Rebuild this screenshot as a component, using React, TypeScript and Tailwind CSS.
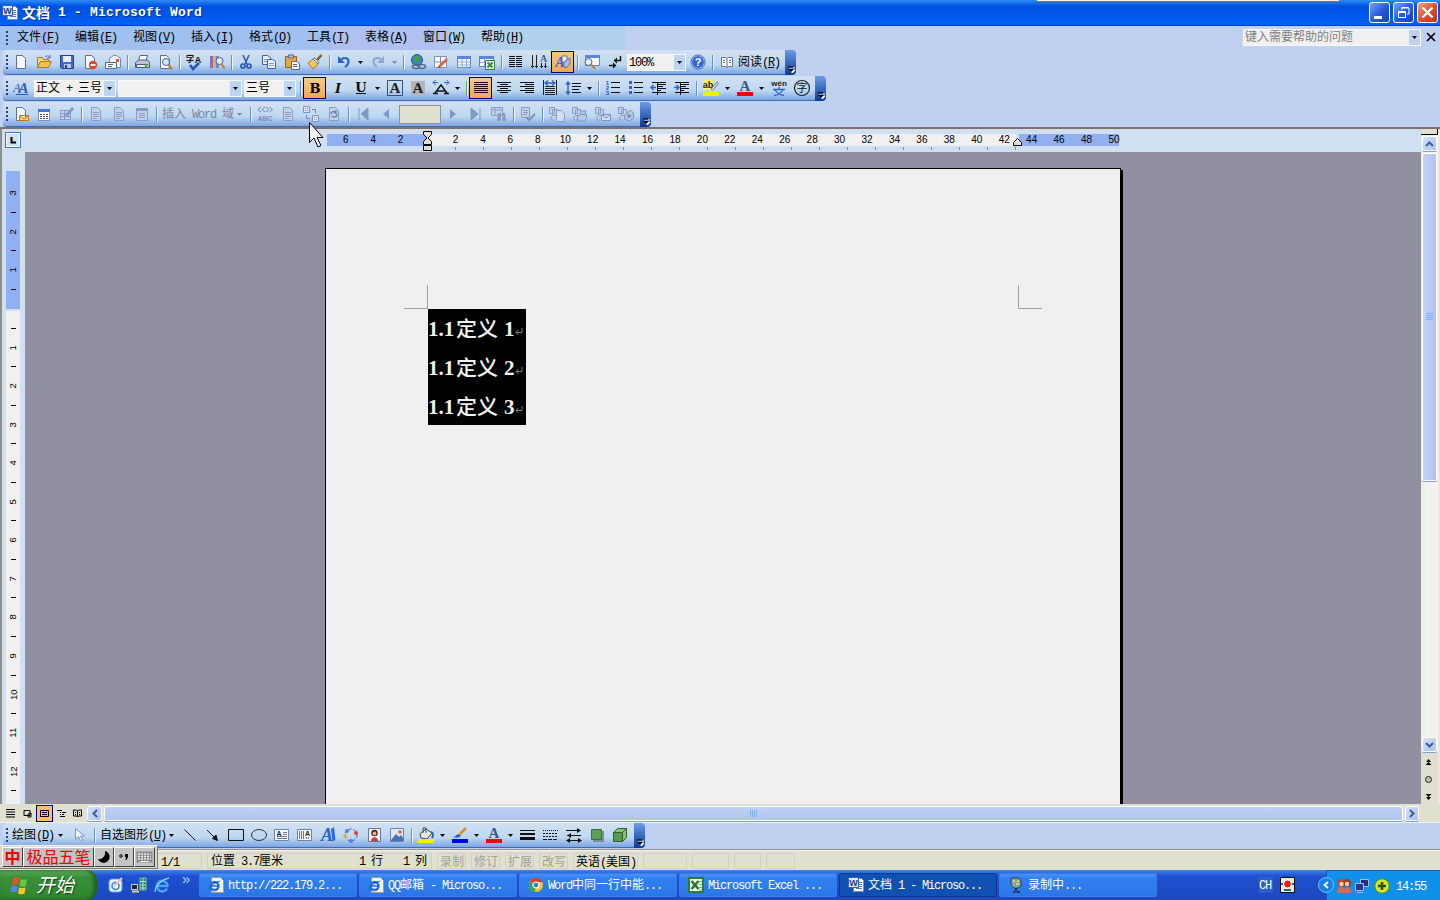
import React from "react";
import clsx from "clsx";

const latin = "font-['Liberation_Mono',monospace] text-[12px] tracking-[-1.2px]";

// Splits a label in CJK and half-width runs. "&X" marks an accelerator key.
const Label = ({ text, className }: { text: string; className?: string }) => {
  const runs = text.match(/&.|[\x20-\x25\x27-\x7e]+|[^\x20-\x7e]+/g) || [];
  return (
    <span className={clsx("whitespace-pre leading-[14px] text-[12px] font-['Noto_Sans_CJK_SC',sans-serif]", className)}>
      {runs.map((run, i) => {
        if (run[0] === "&") {
          return (
            <span key={i} className={clsx(latin, "underline underline-offset-1")}>
              {run[1]}
            </span>
          );
        }
        return run.charCodeAt(0) < 127 ? (
          <span key={i} className={latin}>
            {run}
          </span>
        ) : (
          <span key={i}>{run}</span>
        );
      })}
    </span>
  );
};

const Svg = ({ children, w = 16, h = 16 }: { children: React.ReactNode; w?: number; h?: number }) => (
  <svg width={w} height={h} viewBox={`0 0 ${w} ${h}`} fill="none" className="block shrink-0 overflow-visible">
    {children}
  </svg>
);

const doc = <path d="M3.5 1.5h6l3 3v10h-9z" fill="#f4f7ff" stroke="#5b6f9c" />;
const grayDoc = <path d="M3.5 1.5h6l3 3v10h-9z" fill="#c3d2ec" stroke="#8a9cc4" />;
const grayLines = <path d="M5 6.5h6M5 8.5h6M5 10.5h6M5 12.5h4" stroke="#8a9cc4" />;
const sheets = (
  <path d="M.5 1.5h5v6h-5zM3.5 3.5h5v6h-5zM2 10v4h3" fill="#c3d2ec" stroke="#8a9cc4" />
);
const serifText = (x: number, y: number, size: number, letter: string, fill = "#111") => (
  <text x={x} y={y} fontSize={size} fontWeight="bold" fontFamily="Liberation Serif, serif" fill={fill} textAnchor="middle">
    {letter}
  </text>
);
const slabText = (y: number, letter: string) => (
  <text x={8} y={y} fontSize={13} fontWeight="bold" fontFamily="DejaVu Serif, serif" fill="#000" textAnchor="middle">
    {letter}
  </text>
);
const sansText = (x: number, y: number, size: number, text: string, fill = "#111") => (
  <text x={x} y={y} fontSize={size} fontWeight="bold" fontFamily="Liberation Sans, sans-serif" fill={fill} textAnchor="middle">
    {text}
  </text>
);

const icons: Record<string, React.ReactNode> = {
  new: doc,
  open: (
    <>
      <path d="M1.5 13.5v-10h5l1 2h5v3" fill="#f5d77a" stroke="#a8792a" />
      <path d="M1.5 13.5l3-6h11l-3 6z" fill="#f6c24a" stroke="#a8792a" />
      <path d="M9 3c2-2 4-1 5 1m0-3v3h-3" stroke="#4a6fb5" />
    </>
  ),
  save: (
    <>
      <path d="M1.5 1.5h13v13h-12l-1-1z" fill="#4769cf" stroke="#27408f" />
      <path d="M4 2h8v6H4z" fill="#e8effc" />
      <path d="M5 10h7v4H5z" fill="#b8c6ea" />
      <path d="M6 11h2v3H6z" fill="#27408f" />
    </>
  ),
  permission: (
    <>
      {doc}
      <circle cx="11" cy="11" r="4.2" fill="#e0442a" />
      <path d="M8.5 11h5" stroke="#fff" strokeWidth="1.8" />
    </>
  ),
  mail: (
    <>
      <path d="M4.500 7.500v-3l4-3h3l4 3v9h-11z" fill="#f1f4fb" stroke="#7384a8" />
      <path d="M.5 8.500h11v6H.5zM3 10.500h5M3 12.500h4" fill="#fff" stroke="#56688f" />
      <path d="M11 5h3v3h-3z" fill="#d8602f" />
    </>
  ),
  print: (
    <>
      <path d="M4.500 6.500l1.500-5h7.500l-1.500 5" fill="#fff" stroke="#55628a" />
      <path d="M1.500 8.500l3-2.500h9l2 2.500v5h-14z" fill="#b9c2d6" stroke="#4c587c" />
      <path d="M2.500 10.500h9v3h-9z" fill="#e8ecf5" stroke="#4c587c" />
      <path d="M11 10h3v2h-3z" fill="#2db92d" />
    </>
  ),
  preview: (
    <>
      {doc}
      <circle cx="9" cy="8" r="3.5" fill="#cfe3f6" stroke="#53658d" />
      <path d="M11.5 11l3.5 4" stroke="#c97a2b" strokeWidth="2" />
    </>
  ),
  spell: (
    <>
      <text x="0" y="8" fontSize="8" fontWeight="bold" fontFamily="Noto Sans CJK SC, sans-serif" fill="#111">字</text>
      {sansText(12, 9, 9, "A")}
      <path d="M4 11l3 4 6-6" stroke="#2855b5" strokeWidth="2.6" />
    </>
  ),
  research: (
    <>
      <path d="M1 2h3v12H1z" fill="#8e6fb5" />
      <path d="M4 2h3v12H4z" fill="#e0b25b" />
      <path d="M7 2h3v12H7z" fill="#6e8fd0" />
      <circle cx="10.5" cy="7" r="3.5" fill="#dfecfa" stroke="#55628a" />
      <path d="M12.5 10l3 4.5" stroke="#c97a2b" strokeWidth="2" />
    </>
  ),
  cut: (
    <>
      <path d="M5 1l4 9M11 1L7 10" stroke="#3a5da8" strokeWidth="1.6" />
      <circle cx="5" cy="12" r="2" stroke="#2855b5" strokeWidth="1.7" />
      <circle cx="11" cy="12" r="2" stroke="#2855b5" strokeWidth="1.7" />
    </>
  ),
  copy: (
    <>
      <path d="M1.5 1.5h5l3 2v7h-8z" fill="#e9f0ff" stroke="#3f5fae" />
      <path d="M6.5 5.5h5l3 2v7h-8z" fill="#e9f0ff" stroke="#3f5fae" />
      <path d="M3 5.5h3M3 7.5h3M8 9.5h5M8 11.5h5" stroke="#7a98dc" />
    </>
  ),
  paste: (
    <>
      <path d="M1.5 2.5h11v11h-11z" fill="#e5a83c" stroke="#8f651c" />
      <path d="M4.5 1h5v3h-5z" fill="#aab4ca" stroke="#5c6a8e" />
      <path d="M7.5 7.5h5l3 2v6h-8zM9 10.5h4M9 12.5h4" fill="#fff" stroke="#56688f" />
    </>
  ),
  brush: (
    <>
      <path d="M1 9l5-4 5 5-5 5z" fill="#f3c95e" stroke="#a5702a" />
      <path d="M6 5l2-1 4 4-1 2z" fill="#d6defa" stroke="#65749c" />
      <path d="M10 6l4.5-5" stroke="#8b5427" strokeWidth="2.5" />
    </>
  ),
  undo: (
    <>
      <path d="M2 2v7h7z" fill="#2f62c6" />
      <path d="M4.5 6.5c2-3.500 8-3.500 8 1 0 3-1.500 4-3.500 5.500" stroke="#2f62c6" strokeWidth="2.200" />
    </>
  ),
  redo: (
    <>
      <path d="M14 2v7H7z" fill="#92a8d0" />
      <path d="M11.5 6.5c-2-3.500-8-3.500-8 1 0 3 1.500 4 3.500 5.500" stroke="#92a8d0" strokeWidth="2.200" />
    </>
  ),
  link: (
    <>
      <circle cx="7" cy="6" r="5.5" fill="#3e7fd0" stroke="#24528f" />
      <path d="M3 3l5-2 2 4-4 3-3-1zM8 7l3 0-1 3z" fill="#3ea53e" />
      <ellipse cx="6" cy="12.5" rx="3.5" ry="2" stroke="#56688f" strokeWidth="1.5" />
      <ellipse cx="12" cy="12.5" rx="3.5" ry="2" stroke="#56688f" strokeWidth="1.5" />
    </>
  ),
  tables: (
    <>
      <path d="M1.5 2.5h12v11h-12zM1 8h12M7.5 3v10" fill="#fff" stroke="#7a8fc0" />
      <path d="M6 13l8-8" stroke="#e0672b" strokeWidth="2.5" />
      <path d="M5 14l1-2 1 1z" fill="#333" />
    </>
  ),
  insertTable: (
    <>
      <path d="M1.5 2.5h13v11h-13z" fill="#fff" stroke="#5e7fc4" />
      <path d="M1 2h14v3H1z" fill="#5b86dd" />
      <path d="M1 8h14M1 11h14M6 5v9M10.5 5v9" stroke="#8ea8da" />
    </>
  ),
  excel: (
    <>
      <path d="M.5 2.5h14v10H.5z" fill="#fff" stroke="#5e7fc4" />
      <path d="M0 2h15v3H0z" fill="#5b86dd" />
      <path d="M1 8.500h6M5.500 5v7" stroke="#8ea8da" />
      <path d="M6.5 6.5h9v9h-9z" fill="#e9f5e9" stroke="#2c7a35" />
      <path d="M8.5 8.5l5 5M13.5 8.5l-5 5" stroke="#2c8a35" strokeWidth="1.8" />
    </>
  ),
  columns: <path d="M1 2.5h6M8 2.5h6M1 4.5h6M8 4.5h6M1 6.5h6M8 6.5h6M1 8.5h6M8 8.5h6M1 10.5h6M8 10.5h6M1 12.5h6M8 12.5h6" stroke="#111" />,
  textDir: (
    <>
      <path d="M1.5 1v13M5.5 1v13M10.5 9v5M14.500 9v5M0 12.500h3M4 12.500h3M9 12.500h3M13 12.500h3" stroke="#222" />
      {serifText(12.5, 8, 10, "A", "#3a5da8")}
    </>
  ),
  drawing: (
    <>
      <text x="5" y="13" fontSize="14" fontStyle="italic" fontWeight="bold" fontFamily="Liberation Serif" textAnchor="middle" fill="#3f68c4">A</text>
      <path d="M7 2h5v6H7z" fill="#e9eef9" stroke="#65749c" />
      <path d="M9 8l6-4v6l-4 4-2-1z" fill="#aebadb" stroke="#65749c" />
    </>
  ),
  docMap: (
    <>
      <path d="M1.5 1.5h14v10h-14z" fill="#fff" stroke="#5e7fc4" />
      <path d="M1 1h15v3H1z" fill="#5b86dd" />
      <circle cx="4.500" cy="8" r="3.5" fill="#e1edfb" stroke="#55628a" />
      <path d="M7 10.5l4 4" stroke="#c97a2b" strokeWidth="2" />
    </>
  ),
  marks: (
    <>
      <path d="M13.5 2v4.500h-5M2 11.5h5" stroke="#111" strokeWidth="1.4" />
      <path d="M10 3.500v6L6.500 6.500zM6 8.500v6l3.500-3z" fill="#111" />
    </>
  ),
  help: (
    <>
      <circle cx="8" cy="8" r="6.5" fill="#2f66d4" stroke="#fff" />
      <circle cx="8" cy="8" r="7" stroke="#3a64b8" />
      {sansText(8, 12, 11, "?", "#fff")}
    </>
  ),
  read: <path d="M2.5 3.5h4l1.5 1 1.5-1h4v9h-4l-1.5 1-1.5-1h-4zM8 5v8M4 6.5h2M4 8.5h2M10 6.5h2M10 8.5h2" fill="#f4f6fb" stroke="#6c7590" />,
  styles: (
    <>
      <text x="4" y="12" fontSize="12" fontStyle="italic" fontFamily="Liberation Serif" textAnchor="middle" fill="#2855b5">A</text>
      <text x="10.500" y="13" fontSize="15" fontStyle="italic" fontWeight="bold" fontFamily="Liberation Serif" textAnchor="middle" fill="#2f5fb8">A</text>
      <path d="M3 14.5h12" stroke="#2855b5" />
    </>
  ),
  bold: slabText(12.5, "B"),
  italic: (
    <text x="8" y="12.5" fontSize="13" fontWeight="bold" fontStyle="italic" fontFamily="DejaVu Serif" textAnchor="middle" fill="#111">I</text>
  ),
  underline: (
    <>
      {slabText(11.5, "U")}
      <path d="M3 13.5h10" stroke="#111" />
    </>
  ),
  charBorder: (
    <>
      <path d="M.5.5h15v15H.5z" stroke="#35507f" />
      {serifText(8, 13, 15, "A", "#222")}
    </>
  ),
  charShade: (
    <>
      <path d="M1 1h14v14H1z" fill="#b5b5b5" />
      {serifText(8, 13, 15, "A", "#222")}
    </>
  ),
  charScale: (
    <>
      <path d="M2 13l6-8 6 8M4 11h8M0 13.500h5M11 13.500h5" stroke="#111" strokeWidth="1.4" />
      <path d="M0 2.500h5M2.500 0L0 2.500 2.500 5M16 2.500h-5M13.500 0L16 2.500 13.500 5" stroke="#2f62c6" />
    </>
  ),
  justify: <path d="M1 2.5h14M1 4.5h14M1 6.5h14M1 8.5h14M1 10.5h14M1 12.5h14" stroke="#111" />,
  center: <path d="M1 2.5h14M4 4.5h8M1 6.5h14M4 8.5h8M1 10.5h14M4 12.5h8" stroke="#111" />,
  right: <path d="M1 2.5h14M6 4.5h9M1 6.5h14M6 8.5h9M1 10.5h14M6 12.5h9" stroke="#111" />,
  distribute: (
    <>
      <path d="M3 6.5h10M3 8.5h10M3 10.5h10M3 12.5h10M3 14.5h10M1.5 0v15M14.5 0v15" stroke="#222" />
      <path d="M3 3h10M6 .5L3 3l3 2.5M10 .5L13 3l-3 2.500" stroke="#2f62c6" strokeWidth="1.300" />
    </>
  ),
  spacing: (
    <>
      <path d="M7 3.5h9M7 6.5h9M7 9.5h7M7 12.5h9" stroke="#111" />
      <path d="M3 2v12M1 4.5L3 2l2 2.5M1 11.5L3 14l2-2.5" stroke="#2f62c6" strokeWidth="1.4" />
    </>
  ),
  numbered: (
    <>
      <path d="M6 2.5h9M6 7.5h9M6 12.5h9" stroke="#111" />
      {sansText(2.5, 5, 6, "1", "#2855b5")}
      {sansText(2.5, 10, 6, "2", "#2855b5")}
      {sansText(2.5, 15, 6, "3", "#2855b5")}
    </>
  ),
  bullets: (
    <>
      <path d="M6 2.5h9M6 7.5h9M6 12.5h9" stroke="#111" />
      <path d="M1 1h3v3H1zM1 6h3v3H1zM1 11h3v3H1z" fill="#3f62b8" />
    </>
  ),
  outdent: (
    <>
      <path d="M1 2.5h14M7 4.5h8M7 6.5h5M7 8.5h8M7 10.5h3M1 12.5h14M6.5 2v13" stroke="#111" />
      <path d="M5 7.5H0M2.5 5L0 7.5 2.5 10" stroke="#2f62c6" strokeWidth="1.4" />
    </>
  ),
  indent: (
    <>
      <path d="M1 2.5h14M7 4.5h8M7 6.5h5M7 8.5h8M7 10.5h3M1 12.5h14M6.5 2v13" stroke="#111" />
      <path d="M0 7.5h5M2.5 5L5 7.5 2.5 10" stroke="#2f62c6" strokeWidth="1.4" />
    </>
  ),
  highlight: (
    <>
      <path d="M0 0h10v10H0z" fill="#f3f06a" />
      {sansText(5, 8, 9, "ab", "#222")}
      <path d="M8 9l6-7 1.5 1.5-6 6.5z" fill="#dfe5f3" stroke="#65749c" />
      <path d="M0 12h16v4H0z" fill="#f0f000" />
    </>
  ),
  fontColor: (
    <>
      {serifText(8, 11, 15, "A", "#35588f")}
      <path d="M0 12h16v4H0z" fill="#f40000" />
    </>
  ),
  phonetic: (
    <>
      {sansText(8, 6, 8, "wén", "#222")}
      <path d="M8 7v2M2 9.5h12M4 10c2 3 5 5 9 5.500M12 10c-2 3-5 5-9 5.500" stroke="#2f62c6" strokeWidth="1.300" />
    </>
  ),
  enclose: (
    <>
      <circle cx="8" cy="8" r="7.500" stroke="#222" strokeWidth="1.200" />
      <text x="8" y="12" fontSize="11" fontFamily="Noto Sans CJK SC" textAnchor="middle" fill="#111">字</text>
    </>
  ),
  mergeMain: (
    <>
      {doc}
      <path d="M6.5 9.5h9v5h-9zM7 10l4 3 4-3" fill="#f8d25c" stroke="#c0791c" />
    </>
  ),
  recipients: (
    <>
      <path d="M2.5 3.5h11v11h-11z" fill="#fff" stroke="#7a8fc0" />
      <path d="M2 3h12v3H2z" fill="#3f74dc" />
      <path d="M4 8.5h8M4 10.5h8M4 12.5h8" stroke="#555" strokeDasharray="2 1" />
    </>
  ),
  editList: (
    <>
      <path d="M1.5 4.5h10v9h-10zM1 7.5h10M1 10.5h10M5.5 5v9" fill="#c3d2ec" stroke="#8a9cc4" />
      <path d="M7 10l7-8" stroke="#8a9cc4" strokeWidth="3" />
    </>
  ),
  gDoc: (
    <>
      {grayDoc}
      {grayLines}
    </>
  ),
  gForm: (
    <>
      <path d="M2.5 2.5h11v12h-11zM5 7.5h6M5 9.5h6M5 11.5h6" fill="#c3d2ec" stroke="#8a9cc4" />
      <path d="M2 2h12v3H2z" fill="#8a9cc4" />
    </>
  ),
  abc: (
    <>
      <path d="M4 1L1 3.5 4 6M8 1L5 3.5 8 6M9 1l3 2.5L9 6M12.5 1l3 2.5-3 2.5" stroke="#7186b4" />
      {sansText(8, 15, 7, "ABC", "#7a8db8")}
    </>
  ),
  mapFields: (
    <>
      <path d="M.5.5h6v6h-6zM9.5 9.5h6v6h-6z" fill="#dde6f5" stroke="#8292b8" />
      <path d="M2 2.500h3M2 4.500h3M11 11.500h3M11 13.500h3" stroke="#8292b8" strokeDasharray="1 1" />
      <path d="M9 3.5h3.5V7M7 12.5H3.5V9" stroke="#7186b4" />
    </>
  ),
  refresh: (
    <>
      {grayDoc}
      <path d="M5 8c0-3 5-3 5-1M11 8c0 4-5 4-5 1.5M10 4v3H8" stroke="#6f82b0" strokeWidth="1.3" />
    </>
  ),
  first: <path d="M4 2v12M13 2v12L6 8z" fill="#8297c6" stroke="#8297c6" />,
  prev: <path d="M11 3v10L5 8z" fill="#8297c6" />,
  next: <path d="M5 3v10l6-5z" fill="#8297c6" />,
  last: <path d="M12 2v12M3 2v12l7-6z" fill="#8297c6" stroke="#8297c6" />,
  find: (
    <>
      <path d="M.5 1.5h11v8H.5zM0 4h11M4 2v8" fill="#c3d2ec" stroke="#8a9cc4" />
      <path d="M7 7h3v8H6zM12 7h2l1 8h-4z" fill="#8a9cc4" />
    </>
  ),
  check: (
    <>
      <path d="M1.5 1.5h8v10h-8zM3 4.5h5M3 6.5h5M3 8.5h4" fill="#c3d2ec" stroke="#8a9cc4" />
      <path d="M6 11l3 3 6-6" stroke="#7f92bd" strokeWidth="2" />
    </>
  ),
  toDoc: (
    <>
      {sheets}
      <path d="M7.5 4.5h5l3 3v8h-8z" fill="#d3def2" stroke="#8a9cc4" />
    </>
  ),
  toPrinter: (
    <>
      {sheets}
      <path d="M5.5 10.5l3-2h6v4l-2 2.5h-7zM8 8l1-3h5l-1 3" fill="#b8c7e5" stroke="#7f92bd" />
    </>
  ),
  toMail: (
    <>
      {sheets}
      <path d="M6.5 8.5h9v6h-9zM7 9l4 3 4-3" fill="#d3def2" stroke="#7f92bd" />
    </>
  ),
  toFax: (
    <>
      {sheets}
      <path d="M6.5 9l6-5 3 3v5l-4 3-5-2z" fill="#b8c7e5" stroke="#7f92bd" />
      <circle cx="11" cy="10" r="2" fill="#7f92bd" />
    </>
  ),
  select: <path d="M4.5 1.5v11l3-3 2 5 2-1-2-4.5h4z" fill="#f0f5ff" stroke="#7d93c3" />,
  line: <path d="M2.5 2.5l11 11" stroke="#111" />,
  arrow: <path d="M2 3l9 9M12.5 13.5l-5-2 3.5-3.5z" fill="#111" stroke="#111" />,
  rect: <path d="M.5 2.5h15v11H.5z" stroke="#111" />,
  oval: <ellipse cx="8" cy="8" rx="7.5" ry="5.5" stroke="#333" />,
  textBox: (
    <>
      <path d="M.5 2.5h14v11H.5z" fill="#f7f9ff" stroke="#6f83b3" />
      {sansText(5, 9, 7, "A", "#222")}
      <path d="M9 5.5h4M9 7.5h4M3 9.5h10M3 11.5h10" stroke="#6a7592" />
    </>
  ),
  vTextBox: (
    <>
      <path d="M.5 2.5h14v11H.5z" fill="#f7f9ff" stroke="#6f83b3" />
      <path d="M2.5 4v8M4.5 4v8M6.5 4v8M9.5 10v2M11.5 10v2" stroke="#6a7592" />
      {sansText(10.5, 9, 7, "A", "#222")}
    </>
  ),
  wordArt: (
    <>
      <text x="7" y="14" fontSize="18" fontStyle="italic" fontWeight="bold" fontFamily="Liberation Serif" textAnchor="middle" fill="#2863cf">A</text>
      <path d="M11 2l3-2 1.500 13-3 1.500z" fill="#2f6ad6" />
    </>
  ),
  diagram: (
    <>
      <circle cx="8" cy="8" r="6" stroke="#4a5f90" strokeDasharray="3 2" />
      <circle cx="4" cy="4" r="2" fill="#4a86e0" />
      <circle cx="13" cy="6" r="2" fill="#d84432" />
      <circle cx="8" cy="14" r="2" fill="#4a86e0" />
      <circle cx="2" cy="9" r="1.8" fill="#e3a62e" />
    </>
  ),
  clipArt: (
    <>
      <path d="M2.5 1.5h12v13h-12z" fill="#f3f3fa" stroke="#6f6f9c" />
      <circle cx="8.5" cy="6" r="3.3" fill="#4b2b20" />
      <circle cx="8.5" cy="6.5" r="2" fill="#e6a98a" />
      <path d="M5 14c0-5 7-5 7 0z" fill="#c9412c" />
    </>
  ),
  picture: (
    <>
      <path d="M1.5 1.5h13v13h-13z" fill="#dbe8fb" stroke="#6f83b3" />
      <path d="M2 13l5-6 3 3 2-2 2 3v3H2z" fill="#4a6fb5" />
      <circle cx="11" cy="5" r="1.8" fill="#e0623a" />
    </>
  ),
  fill: (
    <>
      <path d="M2 7l6-5 6 4-5 6-6-1z" fill="#e3e8f2" stroke="#445" />
      <path d="M5 6V1h3v5" stroke="#445" />
      <path d="M13 5c3 1 2 4 1 6" stroke="#2f5fb8" strokeWidth="2" />
      <path d="M0 12h16v4H0z" fill="#f0f000" />
    </>
  ),
  lineColor: (
    <>
      <path d="M1 10c3 0 3-3 6-3l2 2c-2 2-5 2-8 1z" fill="#2f62c6" />
      <path d="M8 7l6-6" stroke="#e0892b" strokeWidth="2.5" />
      <path d="M0 12h16v4H0z" fill="#0000f0" />
    </>
  ),
  lineStyle: (
    <>
      <path d="M0 3.5h15" stroke="#111" />
      <path d="M0 7h15" stroke="#111" strokeWidth="2" />
      <path d="M0 11.500h15" stroke="#111" strokeWidth="3" />
    </>
  ),
  dashStyle: (
    <>
      <path d="M0 3.5h15" stroke="#111" strokeDasharray="1 1" />
      <path d="M0 6.5h15M0 9.5h15" stroke="#111" strokeDasharray="2 1" />
      <path d="M0 12.5h15" stroke="#111" strokeDasharray="4 1" />
    </>
  ),
  arrowStyle: (
    <>
      <path d="M0 3.5h14M1 8.5h14M1 13.5h14" stroke="#111" />
      <path d="M11 1l4 2.500L11 6zM5 6L1 8.5 5 11zM4 11L0 13.500 4 16zM12 11l4 2.500-4 2.500z" fill="#111" />
    </>
  ),
  shadow: (
    <>
      <path d="M4 4h11v11H4z" fill="#7f8a9c" />
      <path d="M2.5 2.5h10v10h-10z" fill="#5aa152" stroke="#3d6e3d" />
    </>
  ),
  cube: (
    <>
      <path d="M1.5 5.5l4-4h9v9l-4 4h-9z" fill="#86c07a" stroke="#335c33" />
      <path d="M1.5 5.5h9v9h-9z" fill="#559b4d" stroke="#335c33" />
      <path d="M10.5 5.5l4-4" stroke="#335c33" />
    </>
  ),
  word: (
    <>
      <path d="M5.5 1.5h8l2 2v11h-10z" fill="#f6f8ff" stroke="#7a8db8" />
      <path d="M10 5.500h4M10 7.5h4M8 9.5h6M8 11.5h6" stroke="#5b7bd0" />
      <path d="M.5.5h10v10H.5z" fill="#dce7fb" stroke="#3a5ea8" />
      {sansText(5.5, 9, 9, "W", "#1f3f8f")}
    </>
  ),
  ie: (
    <>
      <path d="M3.5.5h9l3 3v12h-12z" fill="#f5f5f0" stroke="#9a9a90" />
      <circle cx="6.500" cy="9" r="4" stroke="#2370d8" strokeWidth="2.4" />
      <path d="M4 9h6" stroke="#2370d8" strokeWidth="1.6" />
      <path d="M1 13c1-5 7-8 11-9" stroke="#1853a8" />
    </>
  ),
  ieBig: (
    <>
      <path d="M13 11.500a5.300 5.300 0 1 1 .3-4v1.500H4" stroke="#45a5f2" strokeWidth="2.600" />
      <path d="M1 15C1 8 9 2 15 1" stroke="#8fd0ff" strokeWidth="1.3" />
    </>
  ),
  desktop: (
    <>
      <rect x="1" y="2" width="13" height="13" rx="3" fill="#e9f2fc" stroke="#5aa0e8" />
      <circle cx="7.5" cy="9" r="3.5" stroke="#3488dc" strokeWidth="1.6" />
      <path d="M6 9l8-8" stroke="#eec79a" strokeWidth="2" />
    </>
  ),
  network: (
    <>
      <path d="M.5 7.5h6v5h-6z" fill="#222" stroke="#c8cfdf" />
      <path d="M1 14.5h7" stroke="#d7d28c" strokeWidth="2" />
      <path d="M9 1h6v12H9z" fill="#277a51" stroke="#79c8a2" />
      <path d="M9 4.5h6M9 8h6M9 11h6M12 1v12" stroke="#b6e4cc" />
    </>
  ),
  chrome: (
    <>
      <circle cx="8" cy="8" r="7" fill="#f2c52e" />
      <path d="M8 8L2 4.5A7 7 0 0 1 14.5 5L8 5z" fill="#d93b2b" />
      <path d="M8 8l-1 7A7 7 0 0 1 2 4.5z" fill="#3aa645" />
      <circle cx="8" cy="8" r="3" fill="#3b7de0" stroke="#fff" strokeWidth="1.2" />
    </>
  ),
  xls: (
    <>
      <path d="M1 1h14v14H1z" fill="#e8f2e6" stroke="#2c7a35" strokeWidth="2" />
      <path d="M11 4.500h3M11 7.500h3M11 10.500h3M11 13h3" stroke="#7ab180" />
      <path d="M3.500 4l7 8M10.500 4l-7 8" stroke="#1f7a2c" strokeWidth="2.5" />
    </>
  ),
  recorder: (
    <>
      <path d="M4 1h7l2 3v5l-3 2H6L3 8V3z" fill="#7fa8a0" stroke="#344" />
      <path d="M5 4h2M9 4h2M8 7h3" stroke="#e9e06d" strokeWidth="1.5" />
      <path d="M8 11v4M5 15h2M9 15h3" stroke="#222" strokeWidth="1.5" />
    </>
  ),
};

const Icon = ({ name }: { name: string }) => <Svg>{icons[name]}</Svg>;

const Btn = ({ name, active }: { name: string; active?: boolean }) => (
  <div
    className={clsx(
      "flex w-[23px] h-[22px] shrink-0 items-center justify-center",
      active && "border border-[#000080] bg-linear-to-b from-[#f4c98a] to-[#f0a850]"
    )}
  >
    <Icon name={name} />
  </div>
);

const Caret = ({ gray }: { gray?: boolean }) => (
  <div className="flex w-[11px] shrink-0 items-center justify-center">
    <Svg w={5} h={3}>
      <path d="M0 0h5L2.500 3z" fill={gray ? "#7f8aa5" : "#000"} />
    </Svg>
  </div>
);

const Sep = () => (
  <div className="flex w-[6px] shrink-0 justify-end pr-px">
    <div className="h-[15px] w-px bg-[#6a8ccb]" />
    <div className="h-[15px] w-px bg-[#eef4fc]" />
  </div>
);

const Grip = () => (
  <div className="flex w-[6px] shrink-0 flex-col items-end gap-[2px] pr-px">
    <div className="size-[2px] bg-[#27417f]" />
    <div className="size-[2px] bg-[#27417f]" />
    <div className="size-[2px] bg-[#27417f]" />
    <div className="size-[2px] bg-[#27417f]" />
  </div>
);

const Combo = ({ text, className }: { text: string; className: string }) => (
  <div className={clsx("flex h-[17px] shrink-0 bg-[#f0f0f0] border border-[#f7f9fd]", className)}>
    <div className="-mt-[2px] flex-1 pl-px leading-[14px]">
      <Label text={text} />
    </div>
    <div className="flex w-[11px] items-center bg-[#bdd3f2]">
      <Caret />
    </div>
  </div>
);

const Toolbar = ({ children }: { children: React.ReactNode }) => (
  <div className="mb-px flex h-[25px] w-fit pl-[3px]">
    <div className="flex items-center rounded-l-sm border-b border-[#3b6db3] bg-linear-to-b from-[#d3e0f2] via-[#bdd8f0] via-60% to-[#7fa5e2] pr-[2px]">
      {children}
    </div>
    <div className="flex w-[11px] items-end justify-center rounded-r-sm bg-linear-to-b from-[#6c9be6] to-[#0a3a96] pb-[2px]">
      <Svg w={8} h={7}>
        <path d="M2 2h6M3 4h5L5.500 7z" fill="#fff" stroke="#fff" />
        <path d="M1 1h5" stroke="#000" strokeWidth="1.200" />
        <path d="M1 3h6L4 6z" fill="#000" />
      </Svg>
    </div>
  </div>
);

const btns = (names: string) => names.split(" ").map((name, i) => <Btn key={i} name={name} />);

const TitleBar = () => (
  <div className="flex h-[26px] items-center bg-linear-to-b from-[#2f8cf5] via-[#0050e0] via-25% to-[#0060f5] pl-[2px] pr-[2px] border-b border-[#0040c8]">
    <Icon name="word" />
    <div className="ml-[4px] flex flex-1 items-center whitespace-pre font-bold leading-[16px] text-white [text-shadow:1px_1px_0_#0a2a80]">
      <span className="-mt-[2px] font-['Noto_Sans_CJK_SC',sans-serif] text-[14px]">文档</span>
      <span className="font-['Liberation_Mono',monospace] text-[13px] tracking-[0.2px]"> 1 - Microsoft Word</span>
    </div>
    <div className="flex gap-[3px]">
      <div className="flex size-[21px] rounded-[3px] border border-white bg-linear-to-br from-[#7c9cf0] via-[#2a5ce0] to-[#1440b8]">
        <Svg w={19} h={19}>
          <path d="M4 13h8v3H4z" fill="#fff" />
        </Svg>
      </div>
      <div className="flex size-[21px] rounded-[3px] border border-white bg-linear-to-br from-[#7c9cf0] via-[#2a5ce0] to-[#1440b8]">
        <Svg w={19} h={19}>
          <path d="M8 7V5h7v6h-2M7.500 4.500h7M4.500 8.500h7v6h-7zM4 9.500h8" stroke="#fff" />
        </Svg>
      </div>
      <div className="flex size-[21px] rounded-[3px] border border-white bg-linear-to-br from-[#f0a088] via-[#e05030] to-[#c03010]">
        <Svg w={19} h={19}>
          <path d="M4.500 4.500l10 10M14.500 4.500l-10 10" stroke="#fff" strokeWidth="2.400" />
        </Svg>
      </div>
    </div>
  </div>
);

const menus = ["文件(&F)", "编辑(&E)", "视图(&V)", "插入(&I)", "格式(&O)", "工具(&T)", "表格(&A)", "窗口(&W)", "帮助(&H)"];

const MenuBar = () => (
  <div className="flex h-[24px] items-center bg-[linear-gradient(90deg,#a0c0f0_0_37px,#a8b4f0_37px_50px,#a0c0f0_50px_332px,#b0c0f0_332px_450px,#b0d0f0_450px_626px,#c0d0f0_626px)] pl-[3px]">
    <Grip />
    <div className="-mt-[3px] ml-[8px] flex flex-1 gap-[16px]">
      {menus.map((menu) => (
        <Label key={menu} text={menu} className="w-[42px]" />
      ))}
    </div>
    <div className="-mt-px flex h-[17px] w-[178px] border border-[#f7f9fd] bg-[#f0f0f0]">
      <div className="-mt-[2px] flex-1 pl-px leading-[14px]">
        <Label text="键入需要帮助的问题" className="text-[#808080]" />
      </div>
      <div className="flex w-[11px] items-center bg-[#c0d0f0]">
        <Caret />
      </div>
    </div>
    <div className="-mt-[3px] ml-[6px] mr-[5px]">
      <Svg w={8} h={8}>
        <path d="M0 0l8 8M8 0L0 8" stroke="#000" strokeWidth="1.700" />
      </Svg>
    </div>
  </div>
);

const Toolbars = () => (
  <div className="h-[77px] bg-[#c0d0f0]">
    <Toolbar>
      <Grip />
      {btns("new open save permission mail")}
      <Sep />
      {btns("print preview")}
      <Sep />
      {btns("spell research")}
      <Sep />
      {btns("cut copy paste brush")}
      <Sep />
      <Btn name="undo" />
      <Caret />
      <Btn name="redo" />
      <Caret gray />
      <Sep />
      {btns("link tables insertTable excel")}
      <Sep />
      {btns("columns textDir")}
      <div className="ml-px" />
      <Btn name="drawing" active />
      <Sep />
      {btns("docMap marks")}
      <Combo text="100%" className="ml-px w-[59px]" />
      <Btn name="help" />
      <Sep />
      <div className="ml-[4px] flex w-[64px] items-center gap-[3px]">
        <Icon name="read" />
        <Label text="阅读(&R)" />
      </div>
    </Toolbar>
    <Toolbar>
      <Grip />
      <Btn name="styles" />
      <Combo text="正文 + 三号" className="ml-[2px] w-[82px]" />
      <Combo text="" className="ml-[2px] w-[124px]" />
      <Combo text="三号" className="ml-[2px] w-[52px]" />
      <div className="ml-px" />
      <Sep />
      <Btn name="bold" active />
      {btns("italic underline")}
      <Caret />
      {btns("charBorder charShade charScale")}
      <Caret />
      <Sep />
      <Btn name="justify" active />
      {btns("center right distribute spacing")}
      <Caret />
      <Sep />
      {btns("numbered bullets outdent indent")}
      <Sep />
      <Btn name="highlight" />
      <Caret />
      <Btn name="fontColor" />
      <Caret />
      {btns("phonetic enclose")}
    </Toolbar>
    <Toolbar>
      <Grip />
      {btns("mergeMain recipients editList")}
      <Sep />
      {btns("gDoc gDoc gForm")}
      <Sep />
      <div className="flex w-[88px] items-center pl-[3px] text-[#7c86a0]">
        <Label text="插入 Word 域" />
        <Caret gray />
      </div>
      <Sep />
      {btns("abc gDoc mapFields refresh")}
      <Sep />
      {btns("first prev")}
      <div className="ml-[2px] h-[19px] w-[42px] border border-[#8d93a0] bg-[#e0e0d0]" />
      {btns("next last find")}
      <Sep />
      <Btn name="check" />
      <Sep />
      {btns("toDoc toPrinter toMail toFax")}
      <div className="w-px" />
    </Toolbar>
  </div>
);

const hLabels = [6, 4, 2, 0, ...Array.from({ length: 25 }, (_, i) => 2 * i + 2)];

const HorizontalRuler = () => (
  <div className="flex h-[23px] bg-[#d0e0f0] pl-[3px]">
    <div className="mt-[3px] flex size-[16px] items-center justify-center border border-[#3f74c4] shadow-[inset_0_0_0_1px_#fff]">
      <Svg w={8} h={8}>
        <path d="M2.500 1v5.500H7" stroke="#000" strokeWidth="2" />
      </Svg>
    </div>
    <div className="relative ml-[306px] w-[794px]">
      <div className="mt-[5px] flex h-[12px] w-[792px] bg-[linear-gradient(90deg,#90b0f0_0_100px,#f0f0f0_100px_689px,#d0e0f0_689px_692px,#90b0f0_692px)] pl-[5px]">
        {hLabels.map((n, i) => (
          <div key={i} className="w-[27.450px] shrink-0 text-center font-['Liberation_Sans',sans-serif] text-[10px] leading-[12px] text-black">
            {n || ""}
          </div>
        ))}
      </div>
      <div className="ml-[128px] mt-px flex gap-[27px]">
        {Array.from({ length: 21 }, (_, i) => (
          <div key={i} className="h-[3px] w-px bg-[#808890]" />
        ))}
      </div>
      <div className="absolute left-[96px] top-[2px]">
        <Svg w={9} h={21}>
          <path d="M.5.5h8v3l-3.500 3.500 3.500 3.500v3h-8v-3L4 7 .5 3.500zM.5 14.500h8v5h-8z" fill="#e0e0d0" stroke="#000" />
        </Svg>
      </div>
      <div className="absolute left-[686px] top-[9px]">
        <Svg w={9} h={8}>
          <path d="M4.500.5l4 4v3h-8v-3z" fill="#e0e0d0" stroke="#000" />
        </Svg>
      </div>
    </div>
  </div>
);

const vLabels = ["3", "", "2", "", "1", "", " ", "", ...Array.from({ length: 24 }, (_, i) => (i % 2 ? "" : String(i / 2 + 1)))];

const VerticalRuler = () => (
  <div className="w-[23px] shrink-0 overflow-hidden bg-[#d0e0f0] pl-[4px] pt-[19px]">
    <div className="h-[640px] w-[14px] bg-[linear-gradient(180deg,#90b0f0_0_138px,#d0e0f0_138px_140px,#f0f0f0_140px)] pt-[12.400px]">
      {vLabels.map((label, i) => (
        <div key={i} className="flex h-[19.290px] items-center justify-center">
          {label ? (
            <span className="-rotate-90 font-['Liberation_Sans',sans-serif] text-[9.500px] leading-none">{label}</span>
          ) : (
            <div className="h-px w-[5px] bg-black" />
          )}
        </div>
      ))}
    </div>
  </div>
);

const lines = ["1", "2", "3"];

const Document = () => (
  <div className="flex flex-1 overflow-hidden bg-[#9090a0] pl-[300px] pt-[16px]">
    <div className="flex h-[636px]">
      <div className="w-[796px] border-l border-t border-r border-black bg-[#f0f0f0] pt-[116px]">
        <div className="flex justify-between pl-[78px] pr-[78px]">
          <div className="h-[24px] w-[24px] border-b border-r border-[#a0a0a0]" />
          <div className="h-[24px] w-[24px] border-b border-l border-[#a0a0a0]" />
        </div>
        <div className="ml-[102px] h-[116px] w-[98px] bg-black text-[#f0f0f0]">
          {lines.map((n) => (
            <div key={n} className="flex h-[39px] items-center whitespace-pre font-['Liberation_Serif',serif] text-[21px] font-bold leading-none">
              <span className="mt-[2px] w-[28px]">1.1</span>
              <span className="-mt-[3px] w-[48px] font-['Noto_Sans_CJK_SC',sans-serif] text-[21px] font-medium">定义</span>
              <span className="mt-[2px] w-[11px]">{n}</span>
              <div className="mt-[6px]">
                <Svg w={8} h={8}>
                  <path d="M7 0v4.500H1M3.500 2L1 4.500 3.500 7" stroke="#808080" />
                </Svg>
              </div>
            </div>
          ))}
        </div>
      </div>
      <div className="mt-[2px] w-[2px] bg-black" />
    </div>
  </div>
);

const scrollBtn = "flex shrink-0 items-center justify-center rounded-[2px] border border-white bg-linear-to-br from-[#d4e2fb] to-[#a9c2f2] shadow-[0_1px_0_#7f9fd0]";

const VerticalScroll = () => (
  <div className="flex w-[17px] shrink-0 flex-col items-center bg-[#e0e0d0]">
    <div className="h-[6px] w-full border-b border-r border-black bg-[#e0e0d0]" />
    <div className="flex w-full flex-1 flex-col items-center bg-[linear-gradient(90deg,#eeeedf,#f2f2f2_40%)]">
      <div className={clsx(scrollBtn, "size-[15px] mt-px")}>
        <Svg w={9} h={6}>
          <path d="M1 5l3.500-3.500L8 5" stroke="#405f90" strokeWidth="2" />
        </Svg>
      </div>
      <div className="mt-[2px] flex h-[328px] w-[15px] shrink-0 items-center justify-center rounded-[2px] border border-white bg-linear-to-r from-[#c4d4f6] to-[#aec2f0] shadow-[0_1px_0_#7f9fd0]">
        <Svg w={7} h={8}>
          <path d="M0 .5h7M0 2.500h7M0 4.500h7M0 6.500h7" stroke="#80b0f0" />
        </Svg>
      </div>
      <div className="flex-1" />
      <div className={clsx(scrollBtn, "size-[15px]")}>
        <Svg w={9} h={6}>
          <path d="M1 1l3.500 3.500L8 1" stroke="#405f90" strokeWidth="2" />
        </Svg>
      </div>
    </div>
    <div className="flex h-[52px] w-full flex-col items-center gap-[9px] pt-[7px] pr-[2px]">
      <Svg w={7} h={7}>
        <path d="M3.500 0L6 3H1zM3.500 3L6.500 6h-6z" fill="#000" />
      </Svg>
      <Svg w={9} h={9}>
        <circle cx="4.500" cy="4.500" r="3" fill="#c0c0b8" stroke="#222" />
      </Svg>
      <Svg w={7} h={7}>
        <path d="M3.500 4l3-3h-6zM3.500 7L6 4H1z" fill="#000" />
      </Svg>
    </div>
  </div>
);

const HorizontalScroll = () => (
  <div className="flex h-[18px] items-center bg-[#e0e0d0] pl-[2px]">
    <div className="flex w-[17px] justify-center">
      <Svg w={9} h={9}>
        <path d="M0 .5h9M0 3h9M0 5.500h9M0 8h9" stroke="#000" />
      </Svg>
    </div>
    <div className="flex w-[17px] justify-center">
      <Svg w={9} h={9}>
        <path d="M1 1.500h6v5H1zM5 5l3-1v4H5z" stroke="#000" />
      </Svg>
    </div>
    <div className="flex h-[17px] w-[17px] items-center justify-center border border-[#000080] bg-[#f4c070]">
      <Svg w={9} h={9}>
        <path d="M.5 1.500h8v6h-8zM2 3.500h5M2 5.500h5" stroke="#000" />
      </Svg>
    </div>
    <div className="flex w-[16px] justify-center">
      <Svg w={9} h={9}>
        <path d="M0 1.500h5M3 3.500h1M5 3.500h4M3 5.500h1M5 5.500h2M3 7.500h5" stroke="#000" />
      </Svg>
    </div>
    <div className="flex w-[17px] justify-center">
      <Svg w={9} h={9}>
        <path d="M.5 1v6h3l1 1 1-1h3V1h-3l-1 1-1-1zM4.500 2v6M2 3.500h1M2 5.500h1M6 3.500h1M6 5.500h1" stroke="#000" />
      </Svg>
    </div>
    <div className={clsx(scrollBtn, "ml-[1px] h-[15px] w-[15px]")}>
      <Svg w={6} h={9}>
        <path d="M5 1L1.500 4.500 5 8" stroke="#405f90" strokeWidth="2" />
      </Svg>
    </div>
    <div className="ml-[2px] flex h-[15px] w-[1299px] items-center justify-center rounded-[2px] border border-white bg-linear-to-b from-[#c0d2f2] to-[#b0c4f0] shadow-[0_1px_0_#7f9fd0]">
      <Svg w={8} h={7}>
        <path d="M.5 0v7M2.500 0v7M4.500 0v7M6.500 0v7" stroke="#80b0f0" />
      </Svg>
    </div>
    <div className={clsx(scrollBtn, "ml-[2px] h-[15px] w-[14px]")}>
      <Svg w={6} h={9}>
        <path d="M1 1l3.500 3.500L1 8" stroke="#405f90" strokeWidth="2" />
      </Svg>
    </div>
  </div>
);

const DrawingBar = () => (
  <div className="h-[27px] border-t border-[#f0f0f0] bg-[#c0d0f0]">
    <Toolbar>
      <Grip />
      <div className="flex w-[58px] items-center pl-[3px]">
        <Label text="绘图(&D)" className="w-[43px]" />
        <Caret />
      </div>
      <Btn name="select" />
      <div className="w-px" />
      <Sep />
      <div className="flex w-[81px] items-center pl-[3px]">
        <Label text="自选图形(&U)" className="w-[66px]" />
        <Caret />
      </div>
      {btns("line arrow rect oval textBox vTextBox wordArt diagram clipArt picture")}
      <Sep />
      <Btn name="fill" />
      <Caret />
      <Btn name="lineColor" />
      <Caret />
      <Btn name="fontColor" />
      <Caret />
      {btns("lineStyle dashStyle arrowStyle shadow cube")}
      <div className="w-px" />
    </Toolbar>
  </div>
);

const cell = "h-[16px] border border-[#cfcfcf] leading-[12px]";

const StatusBar = () => (
  <div className="flex h-[21px] items-start border-t border-[#909080] bg-[#e0e0d0] pl-[157px] pt-[3px] shadow-[inset_0_1px_0_#f4f4f0]">
    <div className={clsx(cell, "w-[45px] pl-[3px]")}>
      <Label text="1/1" />
    </div>
    <div className={clsx(cell, "ml-[5px] flex w-[225px] pl-[3px]")}>
      <Label text="位置 3.7厘米" className="-mt-px w-[148px]" />
      <Label text="1 行" className="-mt-px w-[44px]" />
      <Label text="1 列" className="-mt-px" />
    </div>
    {["录制", "修订", "扩展", "改写"].map((mode) => (
      <div key={mode} className={clsx(cell, "ml-[5px] w-[29px] pl-[2px] text-[#a0a098]")}>
        <Label text={mode} />
      </div>
    ))}
    <div className={clsx(cell, "ml-[5px] w-[65px] pl-[2px]")}>
      <Label text="英语(美国)" />
    </div>
    <div className={clsx(cell, "ml-[5px] w-[44px]")} />
    <div className={clsx(cell, "ml-[5px] w-[37px]")} />
    <div className={clsx(cell, "ml-[5px] w-[27px]")} />
    <div className={clsx(cell, "ml-[5px] w-[29px]")} />
  </div>
);

const tasks = [
  { icon: "ie", text: "http://222.179.2..." },
  { icon: "ie", text: "QQ邮箱 - Microso..." },
  { icon: "chrome", text: "Word中同一行中能..." },
  { icon: "xls", text: "Microsoft Excel ..." },
  { icon: "word", text: "文档 1 - Microso...", active: true },
  { icon: "recorder", text: "录制中..." },
];

const Taskbar = () => (
  <div className="flex h-[30px] bg-linear-to-b from-[#3c86e8] via-[#2050d0] via-20% to-[#1c48c0] text-white">
    <div className="flex w-[97px] items-center rounded-r-[10px] bg-linear-to-b from-[#60b060] via-[#389038] via-25% to-[#2f862f] pl-[10px] shadow-[inset_-3px_0_4px_#1c5a1c]">
      <Svg w={19} h={19}>
        <path d="M3 2c2-1.500 4-1 6 0L8 9c-2-1-4-1-6 0z" fill="#e8532a" />
        <path d="M10.500 3c2 1 4 1 6.500 0l-1 7c-2 1-4 1-6.500 0z" fill="#6cc444" />
        <path d="M1.500 10.500c2-1.500 4-1 6 0l-1 6c-2-1-4-1-6 0z" fill="#4d8af0" />
        <path d="M9 11.500c2 1 4 1 6.500 0l-1 6c-2 1-4 1-6.500 0z" fill="#f5c92c" />
      </Svg>
      <span className="-mt-[4px] ml-[7px] font-['Noto_Sans_CJK_SC',sans-serif] text-[19px] italic leading-none [text-shadow:1px_1px_1px_#143c14]">开始</span>
    </div>
    <div className="flex w-[102px] items-center gap-[7px] pl-[11px]">
      <Icon name="desktop" />
      <Icon name="network" />
      <Icon name="ieBig" />
      <span className="-mt-[14px] ml-[5px] font-['Liberation_Sans',sans-serif] text-[15px] leading-none text-[#b8d4ff]">»</span>
    </div>
    <div className="flex flex-1 gap-[2px] pt-[3px]">
      {tasks.map((task) => (
        <div
          key={task.text}
          className={clsx(
            "flex h-[24px] w-[158px] items-center rounded-[2px] border pl-[8px]",
            task.active
              ? "border-[#0c3a90] bg-[#1050b0]"
              : "border-[#3a78e8] bg-linear-to-b from-[#4a90f4] via-[#3080f0] via-20% to-[#2c76e8]"
          )}
        >
          <Icon name={task.icon} />
          <Label text={task.text} className="ml-[4px]" />
        </div>
      ))}
    </div>
    <div className="flex w-[91px] items-center pl-[22px]">
      <div className="flex h-[16px] w-[14px] items-center bg-[#2a60c8] leading-none">
        <Label text="CH" />
      </div>
      <div className="ml-[7px]">
        <Svg w={15} h={16}>
          <path d="M.5.5h14v15H.5z" fill="#e8e8e0" stroke="#111" />
          <circle cx="7.500" cy="7" r="4" fill="#f01818" stroke="#fff" />
          <path d="M1 7h2M12 7h2M4 13h7" stroke="#177060" strokeWidth="2" />
        </Svg>
      </div>
    </div>
    <div className="-ml-[10px] flex w-[122px] items-center">
      <div className="z-10 flex size-[16px] items-center justify-center rounded-full border border-[#70c0ff] bg-[#1880e0]">
        <Svg w={6} h={8}>
          <path d="M5 1L1.500 4 5 7" stroke="#fff" strokeWidth="1.800" />
        </Svg>
      </div>
      <div className="-ml-[8px] flex h-full flex-1 items-center gap-[2px] border-l border-t border-[#0c5cc0] bg-[#1090e8] pl-[9px]">
        <Svg>
          <circle cx="5.500" cy="5" r="4" fill="#c04a28" />
          <circle cx="11" cy="5" r="4" fill="#a33c20" />
          <path d="M1 15c0-8 8-8 8 0zM8 15c0-8 7-8 7 0z" fill="#d96a4a" />
          <circle cx="5.500" cy="6" r="2.200" fill="#f3d0b0" />
          <circle cx="11" cy="6" r="2.200" fill="#f3d0b0" />
        </Svg>
        <Svg>
          <path d="M6.500 1.500h8v7h-8z" fill="#1c2f80" stroke="#a8b8dc" />
          <path d="M1.500 5.500h8v7h-8zM3 14.500h6" fill="#243a90" stroke="#a8b8dc" />
        </Svg>
        <Svg w={18} h={16}>
          <circle cx="10" cy="8" r="7.200" fill="#e8e01c" stroke="#3f9a2c" />
          <path d="M10 4v8M6 8h8" stroke="#145a14" strokeWidth="2.600" />
        </Svg>
        <Label text="14:55" className="ml-[4px]" />
      </div>
    </div>
  </div>
);

const imeKey = "flex h-[20px] items-center justify-center border border-t-white border-l-white border-b-[#404040] border-r-[#404040] bg-[#c4c4c4]";

const ImeBar = () => (
  <div className="absolute left-0 top-[845px] flex h-[24px] w-[158px] items-center border-t border-r border-b border-t-[#f0f0e8] border-r-[#808070] border-b-[#808070] bg-[#d8d8cc] pl-[2px]">
    <div className={clsx(imeKey, "w-[21px] font-['Noto_Sans_CJK_SC',sans-serif] text-[16px] font-bold leading-none text-[#f00000]")}>
      <span className="-mt-[3px]">中</span>
    </div>
    <div className={clsx(imeKey, "w-[71px] font-['Noto_Sans_CJK_SC',sans-serif] text-[16px] leading-none text-[#f00000]")}>
      <span className="-mt-[3px]">极品五笔</span>
    </div>
    <div className={clsx(imeKey, "w-[20px]")}>
      <Svg w={12} h={12}>
        <path d="M7 0a6 6 0 1 1-7 8c4 1 8-3 7-8z" fill="#000" />
      </Svg>
    </div>
    <div className={clsx(imeKey, "w-[20px]")}>
      <Svg w={10} h={8}>
        <circle cx="2" cy="3" r="1.300" stroke="#000" />
        <path d="M6 1h3v3L7.500 7H6.500L7 4H6z" fill="#000" />
      </Svg>
    </div>
    <div className={clsx(imeKey, "w-[21px]")}>
      <Svg w={17} h={12}>
        <path d="M.5.500h16v11H.5z" fill="#8a8a8a" stroke="#aaa" />
        <path d="M2 3h13M2 5.500h13M2 8h13" stroke="#f0f0f0" strokeWidth="1.500" strokeDasharray="2 1" />
        <path d="M4 10.500h9" stroke="#f0f0f0" />
      </Svg>
    </div>
  </div>
);

const App = () => {
  return (
    <div className="relative flex h-[900px] w-[1440px] flex-col overflow-hidden bg-[#c0d0f0] text-black">
      <TitleBar />
      <MenuBar />
      <Toolbars />
      <div className="flex h-[695px] flex-col border-t-2 border-[#80706c] bg-[#e0e0d0]">
        <div className="flex h-[675px] border-l-2 border-[#908f86]">
          <div className="flex flex-1 flex-col">
            <HorizontalRuler />
            <div className="flex h-[652px]">
              <VerticalRuler />
              <Document />
            </div>
          </div>
          <VerticalScroll />
          <div className="w-[2px] bg-[#f0e4e0]" />
        </div>
        <HorizontalScroll />
      </div>
      <DrawingBar />
      <StatusBar />
      <Taskbar />
      <ImeBar />
      <div className="absolute left-[1037px] top-0 h-[2px] w-[302px] border-b border-[#707070] bg-[#f0f0e8]" />
      <div className="absolute left-[309px] top-[122px]">
        <Svg w={15} h={26}>
          <path d="M.5.500v20l4.500-4.500 4 9 3-1.500-4-8h6z" fill="#f0f0f0" stroke="#000" />
        </Svg>
      </div>
    </div>
  );
};

export default App;
